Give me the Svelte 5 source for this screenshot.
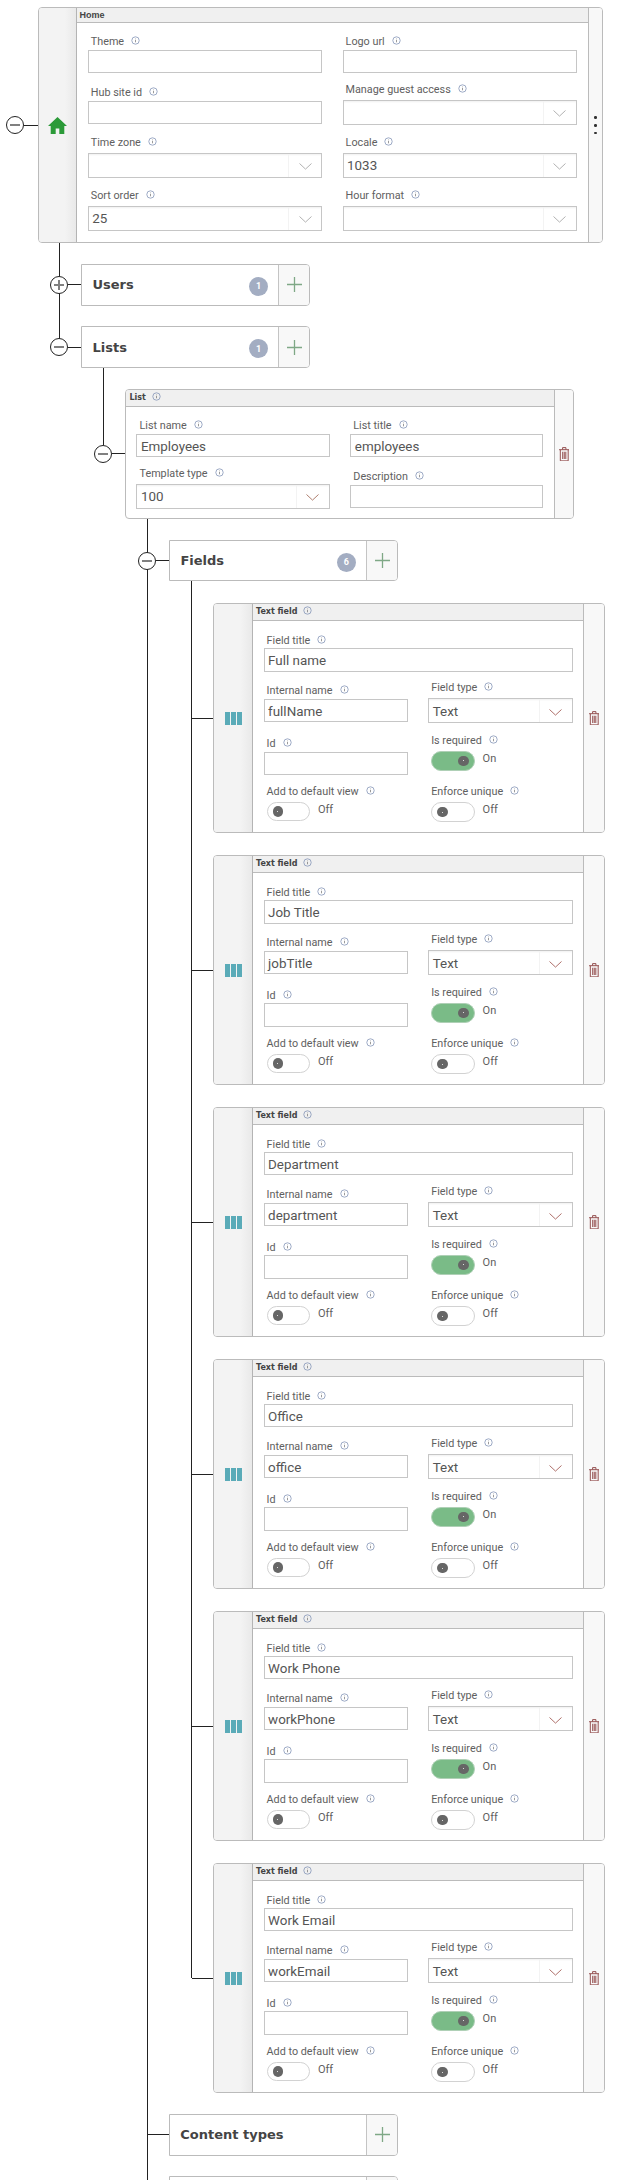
<script>
  const fieldRows = [
    { title: 'Full name', name: 'fullName' },
    { title: 'Job Title', name: 'jobTitle' },
    { title: 'Department', name: 'department' },
    { title: 'Office', name: 'office' },
    { title: 'Work Phone', name: 'workPhone' },
    { title: 'Work Email', name: 'workEmail' }
  ];
</script>

{#snippet info()}
  <svg class="info" viewBox="0 0 9 9" width="9" height="9">
    <circle cx="4.5" cy="4.5" r="3.7" fill="none" stroke="#8596b8" stroke-width="0.8" />
    <path d="M4.5 3.9v2.4M4.5 2.6v.6" stroke="#707070" stroke-width="0.7" />
  </svg>
{/snippet}

{#snippet label(text)}
  <div class="label">{text}{@render info()}</div>
{/snippet}

{#snippet input(text, value = '', cls = '')}
  <div class="field {cls}">
    {@render label(text)}
    <div class="input">{value}</div>
  </div>
{/snippet}

{#snippet select(text, value = '', cls = '', chevron = '#a9a9a9')}
  <div class="field {cls}">
    {@render label(text)}
    <div class="select">
      <span class="value">{value}</span>
      <span class="arrow">
        <svg viewBox="0 0 13 7" width="13" height="7">
          <path d="M.5.5l6 5.6 6-5.6" fill="none" stroke={chevron} stroke-width="0.9" />
        </svg>
      </span>
    </div>
  </div>
{/snippet}

{#snippet toggle(text, on, cls = '')}
  <div class="field {cls}">
    {@render label(text)}
    <div class="switch-row">
      <div class="switch" class:on><span class="knob"></span></div>
      <span class="state">{on ? 'On' : 'Off'}</span>
    </div>
  </div>
{/snippet}

{#snippet trash()}
  <svg viewBox="0 0 10 14" width="10.5" height="14.5" fill="none" stroke="#8d4343" stroke-width="0.9">
    <path d="M0 2.6h10M3.4 2.4V.6h3.2v1.8M1.2 2.8v10.6h7.6V2.8" />
    <path d="M3.5 4.6v7M5 4.6v7M6.5 4.6v7" />
  </svg>
{/snippet}

{#snippet circle(open)}
  <span class="circle">
    <span class="dash"></span>
    {#if !open}<span class="dash upright"></span>{/if}
  </span>
{/snippet}

{#snippet section(name, count)}
  <div class="section">
    <div class="section-main">
      <span class="section-name">{name}</span>
      {#if count}<span class="badge">{count}</span>{/if}
    </div>
    <div class="section-add">
      <svg viewBox="0 0 15 15" width="15" height="15">
        <path d="M7.5 0v15M0 7.5h15" stroke="#7fa886" stroke-width="1.3" />
      </svg>
    </div>
  </div>
{/snippet}

<div class="page">
  <span class="line line-home"></span>
  <span class="line line-lists"></span>
  <span class="line line-list"></span>
  <span class="line line-fields"></span>

  <div class="row lvl0 home-row">
    {@render circle(true)}
    <span class="stub"></span>
    <div class="card home-card">
      <div class="pane-left home-left">
        <svg viewBox="0 0 19 17" width="19" height="17">
          <path d="M9.5 0L0 9h2.7v8h5v-5.6h3.6V17h5V9H19z" fill="#2b9a38" />
        </svg>
      </div>
      <div class="main">
        <div class="head home-head"><span class="head-title home-title">Home</span></div>
        <div class="body home-body">
          <div class="col">
            {@render input('Theme')}
            {@render input('Hub site id', '', 'g11')}
            {@render select('Time zone', '', 'g10')}
            {@render select('Sort order', '25', 'g9')}
          </div>
          <div class="col">
            {@render input('Logo url')}
            {@render select('Manage guest access', '', 'g8')}
            {@render select('Locale', '1033', 'g9')}
            {@render select('Hour format', '', 'g9')}
          </div>
        </div>
      </div>
      <div class="pane-right home-right">
        <span class="dot"></span><span class="dot"></span><span class="dot"></span>
      </div>
    </div>
  </div>

  <div class="row lvl1 gap21">
    {@render circle(false)}
    <span class="stub"></span>
    {@render section('Users', 1)}
  </div>

  <div class="row lvl1 gap21">
    {@render circle(true)}
    <span class="stub"></span>
    {@render section('Lists', 1)}
  </div>

  <div class="row lvl2 gap21">
    {@render circle(true)}
    <span class="stub"></span>
    <div class="card list-card">
      <div class="main">
        <div class="head">
          <span class="head-title">List</span>{@render info()}
        </div>
        <div class="body list-body">
          <div class="col">
            {@render input('List name', 'Employees')}
            {@render select('Template type', '100', 'g8', '#a5705f')}
          </div>
          <div class="col">
            {@render input('List title', 'employees')}
            {@render input('Description', '', 'g11')}
          </div>
        </div>
      </div>
      <div class="pane-right list-right">{@render trash()}</div>
    </div>
  </div>

  <div class="row lvl3 gap21">
    {@render circle(true)}
    <span class="stub"></span>
    {@render section('Fields', 6)}
  </div>

  {#each fieldRows as f}
    <div class="row lvl4 gap-field">
      <span class="stub long"></span>
      <div class="card field-card">
        <div class="pane-left field-left">
          <svg viewBox="0 0 17 13" width="17" height="13">
            <path d="M0 0h5v13H0zM6 0h5v13H6zM12 0h5v13h-5z" fill="#5aabb8" />
          </svg>
        </div>
        <div class="main">
          <div class="head">
            <span class="head-title">Text field</span>{@render info()}
          </div>
          <div class="body field-body">
            {@render input('Field title', f.title)}
            <div class="cols">
              <div class="col">
                {@render input('Internal name', f.name, 'g11')}
                {@render input('Id', '', 'g13')}
                {@render toggle('Add to default view', false, 'g8')}
              </div>
              <div class="col">
                {@render select('Field type', 'Text', 'g8', '#a5605a')}
                {@render toggle('Is required', true, 'g9')}
                {@render toggle('Enforce unique', false, 'g13')}
              </div>
            </div>
          </div>
        </div>
        <div class="pane-right field-right">{@render trash()}</div>
      </div>
    </div>
  {/each}

  <div class="row lvl3b gap21">
    <span class="stub long"></span>
    {@render section('Content types')}
  </div>

  <div class="row lvl3b gap21">
    <span class="stub long"></span>
    {@render section('')}
  </div>
</div>

<style>
  :global(body) {
    margin: 0;
    background: #fff;
  }

  .page {
    position: relative;
    box-sizing: border-box;
    width: 626px;
    height: 2180px;
    padding-top: 7.3px;
    overflow: hidden;
    font-family: Roboto, 'Open Sans', sans-serif;
    color: #555;
  }

  /* tree connectors */
  .line {
    position: absolute;
    width: 1px;
    background: #222;
  }
  .line-home {
    left: 59px;
    top: 243px;
    height: 104px;
  }
  .line-lists {
    left: 103px;
    top: 367px;
    height: 78px;
  }
  .line-list {
    left: 147px;
    top: 519px;
    height: 1661px;
  }
  .line-fields {
    left: 191px;
    top: 581px;
    height: 1397px;
  }

  .row {
    display: flex;
    align-items: center;
    position: relative;
  }
  .lvl0 {
    padding-left: 6.4px;
  }
  .lvl1 {
    padding-left: 50.3px;
  }
  .lvl2 {
    padding-left: 94.3px;
  }
  .lvl3 {
    padding-left: 138.2px;
  }
  .lvl3b {
    padding-left: 148px;
  }
  .lvl4 {
    padding-left: 192px;
  }
  .gap21 {
    margin-top: 20.85px;
  }
  .gap-field {
    margin-top: 21.4px;
  }

  .circle {
    position: relative;
    flex: none;
    box-sizing: border-box;
    width: 18px;
    height: 18px;
    border: 1px solid #222;
    border-radius: 50%;
    background: #fff;
    z-index: 1;
  }
  .dash {
    position: absolute;
    left: 3px;
    top: 7px;
    width: 10px;
    height: 2px;
    background: #808080;
  }
  .dash.upright {
    left: 7px;
    top: 3px;
    width: 2px;
    height: 10px;
  }
  .stub {
    flex: none;
    width: 13.2px;
    height: 1px;
    background: #222;
  }
  .stub.long {
    width: 21.3px;
  }

  /* cards */
  .card {
    display: flex;
    box-sizing: border-box;
    border: 1px solid #bbb;
    border-radius: 4px;
    overflow: hidden;
    background: #fff;
  }
  .home-card {
    width: 565.4px;
    height: 236px;
  }
  .list-card {
    width: 449px;
    height: 130.6px;
  }
  .field-card {
    width: 391.4px;
    height: 230.6px;
  }

  .pane-left {
    flex: none;
    display: flex;
    align-items: center;
    justify-content: center;
    box-sizing: border-box;
    border-right: 1px solid #b4b4b4;
    background: linear-gradient(to right, #f3f3f3 70%, #e9e9e9);
  }
  .home-left {
    width: 38px;
  }
  .field-left {
    width: 38.7px;
  }
  .pane-right {
    flex: none;
    display: flex;
    align-items: center;
    justify-content: center;
    box-sizing: border-box;
    border-left: 1px solid #bbb;
    background: #f8f8f8;
  }
  .home-right {
    flex-direction: column;
    gap: 5px;
    width: 14px;
  }
  .list-right {
    width: 19.5px;
  }
  .field-right {
    width: 20.6px;
  }
  .dot {
    width: 2.6px;
    height: 2.6px;
    border-radius: 50%;
    background: #333;
  }

  .main {
    flex: 1;
    min-width: 0;
  }
  .head {
    display: flex;
    align-items: center;
    box-sizing: border-box;
    height: 17px;
    padding-left: 3px;
    gap: 6px;
    border-bottom: 1px solid #bbb;
    background: #f0f0f0;
  }
  .home-head {
    height: 14.4px;
  }
  .head-title {
    font-family: 'DejaVu Sans', sans-serif;
    font-size: 8px;
    font-weight: 700;
    color: #444;
  }
  .home-title {
    font-family: 'Liberation Sans', sans-serif;
    font-size: 9px;
  }

  .body {
    box-sizing: border-box;
    padding-top: 11.3px;
  }
  .home-body {
    display: flex;
    gap: 20.4px;
    padding-left: 11.2px;
    padding-right: 11px;
  }
  .list-body {
    display: flex;
    gap: 20.8px;
    padding-left: 10px;
    padding-right: 10.7px;
  }
  .field-body {
    padding-left: 10.6px;
    padding-right: 10.6px;
  }
  .cols {
    display: flex;
    gap: 20.3px;
  }
  .col {
    flex: 1;
    min-width: 0;
  }

  .g8 {
    margin-top: 8.4px;
  }
  .g9 {
    margin-top: 9.5px;
  }
  .g10 {
    margin-top: 10.6px;
  }
  .g11 {
    margin-top: 11.3px;
  }
  .g13 {
    margin-top: 13.3px;
  }

  .label {
    display: flex;
    align-items: center;
    gap: 7px;
    height: 16px;
    padding-left: 3px;
    font-size: 10.8px;
    color: #606060;
    white-space: nowrap;
  }
  .info {
    flex: none;
    margin-top: -2px;
  }
  .input,
  .select {
    box-sizing: border-box;
    display: flex;
    align-items: center;
    border: 1px solid #c6c6c6;
    font-size: 13.4px;
    color: #555;
  }
  .input {
    height: 23.4px;
    padding: 2px 0 0 3.5px;
  }
  .select {
    height: 25.4px;
    margin-top: 2px;
    box-shadow: inset 0 2px 2px -1px #f0f0f0;
  }
  .select .value {
    flex: 1;
    padding: 1px 0 0 3.5px;
  }
  .arrow {
    flex: none;
    display: flex;
    align-items: center;
    justify-content: center;
    box-sizing: border-box;
    width: 33px;
    height: 100%;
    padding-top: 3px;
    border-left: 1px solid #f3f3f3;
  }

  .switch-row {
    display: flex;
    align-items: flex-start;
    gap: 8px;
    margin-top: 2.5px;
    padding-left: 3px;
  }
  .switch {
    display: flex;
    align-items: center;
    box-sizing: border-box;
    width: 43.4px;
    height: 19.4px;
    padding: 0 5px;
    border: 1px solid #d2d2d2;
    border-radius: 10px;
    background: #fff;
  }
  .switch.on {
    justify-content: flex-end;
    border-color: #afd0b6;
    background: #7abb87;
  }
  .knob {
    position: relative;
    width: 10.5px;
    height: 10.5px;
    border-radius: 50%;
    background: #666;
  }
  .knob::after {
    content: '';
    position: absolute;
    left: 4.7px;
    top: 4.7px;
    width: 1px;
    height: 1px;
    background: #ddd;
  }
  .state {
    font-size: 11px;
    line-height: 15px;
    color: #606060;
  }

  /* collapsed sections */
  .section {
    display: flex;
    box-sizing: border-box;
    width: 229px;
    height: 41.4px;
    border: 1px solid #bbb;
    border-radius: 0 4px 4px 0;
    background: #fff;
  }
  .section-main {
    flex: 1;
    display: flex;
    align-items: center;
    justify-content: space-between;
    padding: 0 10.5px 0 10px;
  }
  .section-name {
    font-family: 'DejaVu Sans', sans-serif;
    font-size: 13px;
    font-weight: 700;
    color: #444;
  }
  .badge {
    display: flex;
    align-items: center;
    justify-content: center;
    width: 19px;
    height: 19px;
    margin-top: 3px;
    border-radius: 50%;
    background: #a3adc2;
    color: #fff;
    font-size: 9px;
    font-weight: 700;
  }
  .section-add {
    flex: none;
    display: flex;
    align-items: center;
    justify-content: center;
    box-sizing: border-box;
    width: 31px;
    border-left: 1px solid #c4c4c4;
    border-radius: 0 3px 3px 0;
    background: #f8f8f8;
  }
</style>
